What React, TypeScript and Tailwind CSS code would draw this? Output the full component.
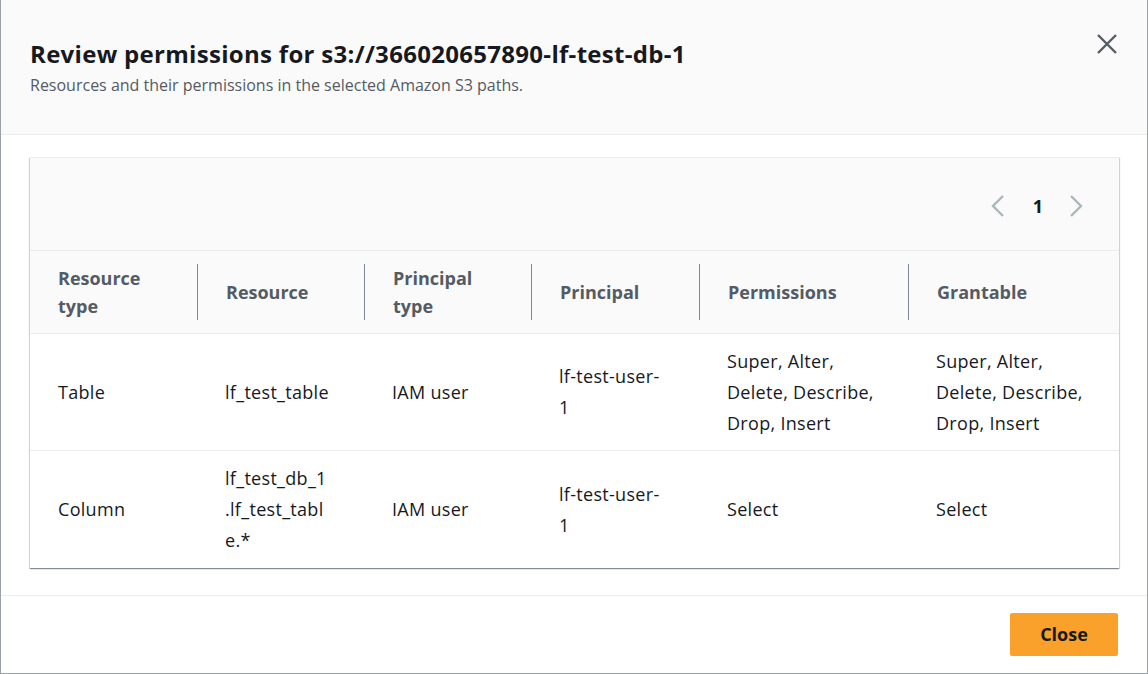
import React from "react";

type Row = {
  type: string;
  resource: string[];
  principalType: string;
  principal: string[];
  permissions: string[];
  grantable: string[];
};

const rows: Row[] = [
  {
    type: "Table",
    resource: ["lf_test_table"],
    principalType: "IAM user",
    principal: ["lf-test-user-", "1"],
    permissions: ["Super, Alter,", "Delete, Describe,", "Drop, Insert"],
    grantable: ["Super, Alter,", "Delete, Describe,", "Drop, Insert"],
  },
  {
    type: "Column",
    resource: ["lf_test_db_1", ".lf_test_tabl", "e.*"],
    principalType: "IAM user",
    principal: ["lf-test-user-", "1"],
    permissions: ["Select"],
    grantable: ["Select"],
  },
];

const headers: string[][] = [
  ["Resource", "type"],
  ["Resource"],
  ["Principal", "type"],
  ["Principal"],
  ["Permissions"],
  ["Grantable"],
];

const cols = "grid grid-cols-[167px_167px_167px_168px_209px_210px]";

function Lines({ lines }: { lines: string[] }) {
  return (
    <div className="flex flex-col">
      {lines.map((l, i) => (
        <span key={i} className="whitespace-nowrap">
          {l}
        </span>
      ))}
    </div>
  );
}

function Cell({ lines }: { lines: string[] }) {
  return (
    <div className="flex items-center pl-[28px] pr-4">
      <Lines lines={lines} />
    </div>
  );
}

function App() {
  return (
    <div
      className="w-[1148px] h-[674px] bg-white flex flex-col border-x border-b border-[#9ba1a6] overflow-hidden"
      style={{ fontFamily: '"Open Sans", "Noto Sans", sans-serif' }}
    >
      {/* header */}
      <div className="h-[135px] shrink-0 bg-[#fafafa] border-b border-[#eaeded] flex justify-between pl-[29px] pr-[30px]">
        <div className="pt-[37px]">
          <h1 className="text-[24px] leading-[34px] font-bold text-[#16191f] tracking-[0.3px]">
            Review permissions for s3://366020657890-lf-test-db-1
          </h1>
          <p className="text-[16px] leading-[22px] text-[#545b64] mt-[3px]">
            Resources and their permissions in the selected Amazon S3 paths.
          </p>
        </div>
        <div className="pt-[34px]">
          <svg width="20" height="20" viewBox="0 0 20 20">
            <path
              d="M1 1 L19 19 M19 1 L1 19"
              stroke="#545b64"
              strokeWidth="2.4"
              fill="none"
            />
          </svg>
        </div>
      </div>

      {/* body */}
      <div className="flex-1 pt-[22px] px-[29px]">
        <div className="w-[1089px] bg-white border-t border-[#eaeded] shadow-[0_1px_1px_0_rgba(0,28,36,0.3),1px_1px_1px_0_rgba(0,28,36,0.15),-1px_1px_1px_0_rgba(0,28,36,0.15)]">
          <div className="h-[93px] bg-[#fafafa] border-b border-[#eaeded] flex items-center justify-end pr-[36px]">
            <div className="flex items-center gap-[26px] mt-[4px]">
              <svg width="14" height="24" viewBox="0 0 14 24" className="mr-[2px]">
                <path d="M12 2 L2 12 L12 22" stroke="#aab7b8" strokeWidth="2.4" fill="none" />
              </svg>
              <span className="text-[18px] font-bold text-[#16191f]">1</span>
              <svg width="14" height="24" viewBox="0 0 14 24">
                <path d="M2 2 L12 12 L2 22" stroke="#aab7b8" strokeWidth="2.4" fill="none" />
              </svg>
            </div>
          </div>
          <div className={`${cols} h-[83px] bg-[#fafafa] border-b border-[#eaeded] text-[18px] leading-[28px] font-bold text-[#545b64]`}>
            {headers.map((h, i) => (
              <div key={i} className="flex items-center">
                {i > 0 && <div className="w-px h-[56px] bg-[#7d8998] shrink-0" />}
                <div className="pl-[28px]">
                  <Lines lines={h} />
                </div>
              </div>
            ))}
          </div>
          {rows.map((r, i) => (
            <div
              key={i}
              className={`${cols} h-[117px] text-[18px] leading-[31px] tracking-[0.3px] text-[#16191f] ${
                i < rows.length - 1 ? "border-b border-[#eaeded]" : ""
              }`}
            >
              <Cell lines={[r.type]} />
              <Cell lines={r.resource} />
              <Cell lines={[r.principalType]} />
              <Cell lines={r.principal} />
              <Cell lines={r.permissions} />
              <Cell lines={r.grantable} />
            </div>
          ))}
        </div>
      </div>

      {/* footer */}
      <div className="h-[78px] shrink-0 border-t border-[#eaeded] flex justify-end pt-[17px] pr-[29px]">
        <button className="w-[108px] h-[43px] rounded-[2px] bg-[#f9a12a] text-[18px] font-bold text-[#16191f]">
          Close
        </button>
      </div>
    </div>
  );
}

export default App;
